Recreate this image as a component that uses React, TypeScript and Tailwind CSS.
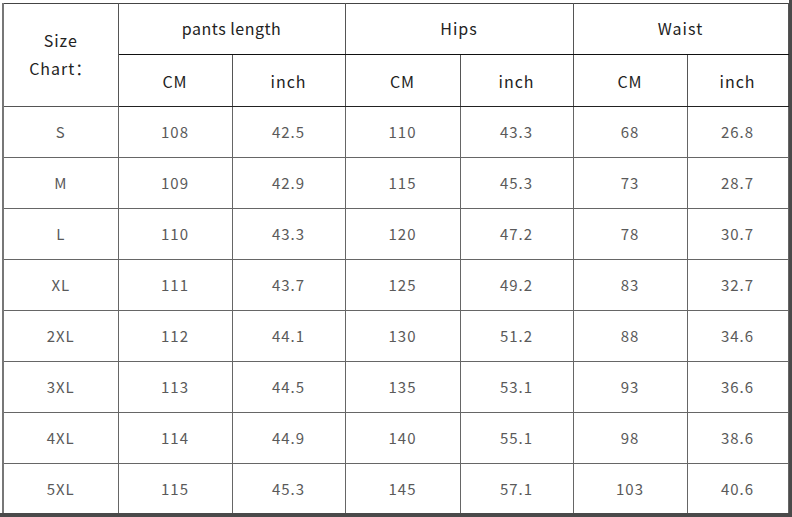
import React from "react";

const rows: [string, string, string, string, string, string, string][] = [
  ["S", "108", "42.5", "110", "43.3", "68", "26.8"],
  ["M", "109", "42.9", "115", "45.3", "73", "28.7"],
  ["L", "110", "43.3", "120", "47.2", "78", "30.7"],
  ["XL", "111", "43.7", "125", "49.2", "83", "32.7"],
  ["2XL", "112", "44.1", "130", "51.2", "88", "34.6"],
  ["3XL", "113", "44.5", "135", "53.1", "93", "36.6"],
  ["4XL", "114", "44.9", "140", "55.1", "98", "38.6"],
  ["5XL", "115", "45.3", "145", "57.1", "103", "40.6"],
];

const rowHeights = [51, 51, 51, 51, 51, 51, 51, 50];

export default function App() {
  const font = { fontFamily: '"Noto Sans CJK SC", "Noto Sans", sans-serif' };
  return (
    <div className="w-[792px] h-[517px] bg-white flex flex-col overflow-hidden" style={font}>
      <div className="flex flex-1 min-h-0">
        <div className="w-[789px] pt-[3px] pl-[2px]">
          <table className="border-collapse table-fixed w-[785px] text-center">
            <colgroup>
              <col className="w-[115px]" />
              <col className="w-[114px]" />
              <col className="w-[113px]" />
              <col className="w-[115px]" />
              <col className="w-[113px]" />
              <col className="w-[114px]" />
              <col className="w-[101px]" />
            </colgroup>
            <thead>
              <tr className="h-[51px]">
                <th
                  rowSpan={2}
                  className="border border-[#555] border-l-2 border-l-[#777] border-t-[#444] font-normal text-[16px] leading-[28px] tracking-[1px] text-[#222] pb-[2px]"
                >
                  Size
                  <br />
                  Chart：
                </th>
                <th colSpan={2} className="border border-[#555] border-t-[#444] border-b-[#111] font-normal text-[16px] tracking-[0.5px] text-[#222] pb-[2px]">
                  pants length
                </th>
                <th colSpan={2} className="border border-[#555] border-t-[#444] border-b-[#111] font-normal text-[16px] tracking-[1px] text-[#222] pb-[2px]">
                  Hips
                </th>
                <th colSpan={2} className="border border-[#555] border-t-[#444] border-b-[#111] font-normal text-[16px] tracking-[1px] text-[#222] pb-[2px]">
                  Waist
                </th>
              </tr>
              <tr className="h-[52px]">
                {["CM", "inch", "CM", "inch", "CM", "inch"].map((t, i) => (
                  <th
                    key={i}
                    className="border border-[#555] border-b-[#222] font-normal text-[16px] tracking-[1px] text-[#222]"
                  >
                    {t}
                  </th>
                ))}
              </tr>
            </thead>
            <tbody>
              {rows.map((r, ri) => (
                <tr key={ri} style={{ height: rowHeights[ri] }}>
                  {r.map((c, ci) => (
                    <td
                      key={ci}
                      className={
                        "border border-[#666] text-[15px] tracking-[1px] text-[#5a5a5a] " +
                        (ci === 0 ? "border-l-2 border-l-[#777] " : "") +
                        (ri === rows.length - 1 ? "border-b-0" : "")
                      }
                    >
                      {c}
                    </td>
                  ))}
                </tr>
              ))}
            </tbody>
          </table>
        </div>
        <div className="w-[3px] bg-[#4a4a4a]" />
      </div>
      <div className="h-[4px] bg-[#4a4a4a] shrink-0" />
    </div>
  );
}
